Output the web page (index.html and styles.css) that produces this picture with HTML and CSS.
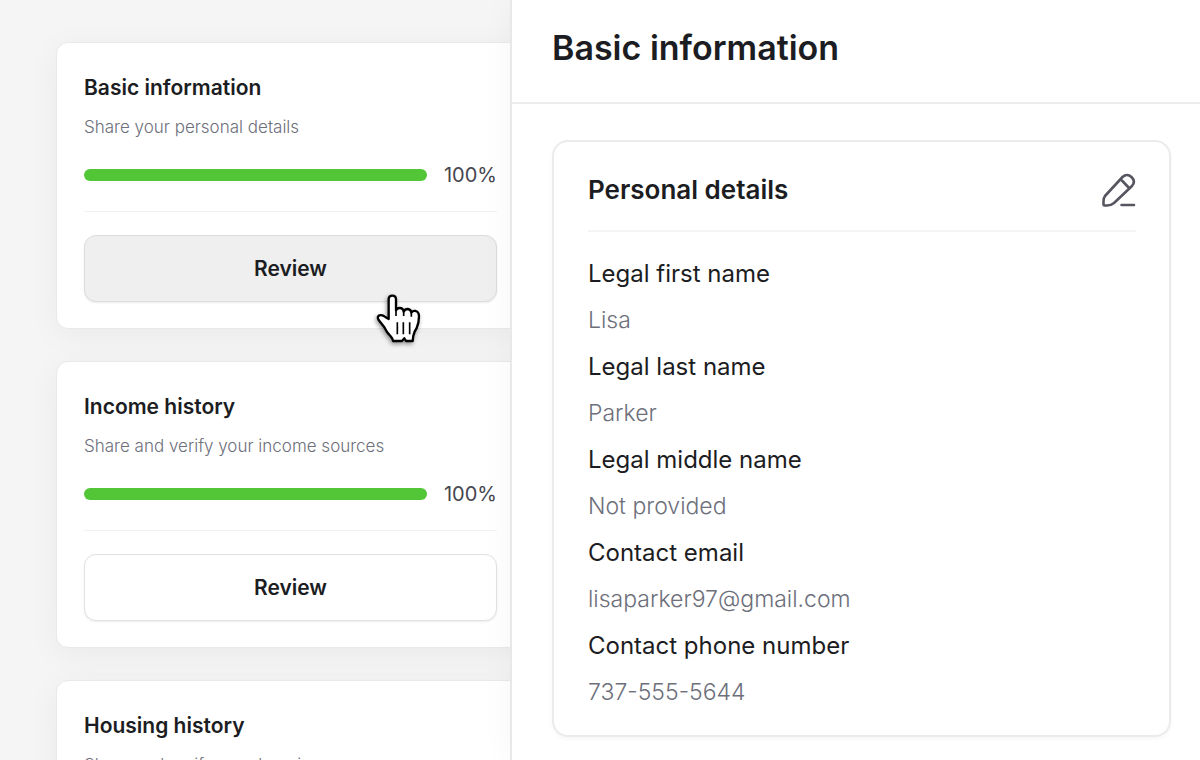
FILE: index.html
```html
<!DOCTYPE html>
<html lang="en">
<head>
    <meta charset="UTF-8">
    <meta name="viewport" content="width=device-width, initial-scale=1.0">
    <title>Basic information</title>
    <link rel="stylesheet" href="styles.css">
</head>
<body>

<div class="layout">
    <main class="sections">
        <section class="card">
            <h2>Basic information</h2>
            <p>Share your personal details</p>
            <div class="progress-row">
                <progress id="basic" max="100" value="100"></progress>
                <label for="basic">100%</label>
            </div>
            <button type="button" class="review active">Review</button>
            <svg class="pointer" viewBox="45 22 144 156" aria-hidden="true">
                <path class="hand" d="M86 100V41Q86 30 97 30Q108 30 108 41V74Q111 67 119 67Q130 67 131 78Q135 70 143 70Q153 71 154 81Q159 74 167 76Q177 79 177 92Q177 112 170 127Q162 139 160 150L158 166H138L133 158L126 166H99Q99 159 92 152Q80 141 73 125L56 103Q50 93 58 89Q67 86 76 94Z"/>
                <path class="lines" d="M108 72V91M131 76V91M154 79V93M112 110V146M130 110V146M149 110V146"/>
            </svg>
        </section>

        <section class="card">
            <h2>Income history</h2>
            <p>Share and verify your income sources</p>
            <div class="progress-row">
                <progress id="income" max="100" value="100"></progress>
                <label for="income">100%</label>
            </div>
            <button type="button" class="review">Review</button>
        </section>

        <section class="card">
            <h2>Housing history</h2>
            <p>Share and verify your housing</p>
        </section>
    </main>

    <aside class="drawer">
        <header class="drawer-header">
            <h1>Basic information</h1>
        </header>
        <section class="details">
            <div class="details-header">
                <h2>Personal details</h2>
                <button type="button" class="edit" aria-label="Edit personal details">
                    <svg viewBox="0 0 36 36" aria-hidden="true">
                        <path d="M5 24L22.500 5Q27 1 31.500 5Q36 9.500 32 14L14 31Q11 33.500 7 33.500H4.500Q3.500 33.500 3.500 32.500V29Q3.500 26 5 24ZM21 7.500L29.500 16.500M21.500 33H34"/>
                    </svg>
                </button>
            </div>
            <dl>
                <dt>Legal first name</dt>
                <dd>Lisa</dd>
                <dt>Legal last name</dt>
                <dd>Parker</dd>
                <dt>Legal middle name</dt>
                <dd>Not provided</dd>
                <dt>Contact email</dt>
                <dd>lisaparker97@gmail.com</dd>
                <dt>Contact phone number</dt>
                <dd>737-555-5644</dd>
            </dl>
        </section>
    </aside>
</div>

</body>
</html>
```
FILE: styles.css
```css
* {
    box-sizing: border-box;
}
body {
    margin: 0;
    font-family: Inter, "Noto Sans", sans-serif;
    color: #1c1d22;
    background-color: #f5f5f5;
}
h1, h2, p, dl, dd {
    margin: 0;
}
h1, h2 {
    font-weight: 600;
}
button {
    font-family: inherit;
    color: inherit;
    cursor: pointer;
}
.layout {
    display: grid;
    grid-template-columns: 17fr 23fr;
    height: 100vh;
    overflow: hidden;
}

/* section cards, running in under the drawer */
.sections {
    display: flex;
    flex-direction: column;
    gap: 32px;
    padding: 42px 0 0 56px;
    min-width: 0;
    overflow: hidden;
}
.card {
    position: relative;
    flex: none;
    margin-right: -15px;
    padding: 30px 27px 26px;
    background-color: #fff;
    border: 1px solid #e9e9e9;
    border-radius: 12px;
    box-shadow: 0 6px 32px rgba(0, 0, 0, 0.05);
}
.card h2 {
    font-size: 21px;
    line-height: 30px;
}
.card p {
    margin: 10px 0 20px;
    font-size: 17px;
    line-height: 28px;
    font-weight: 300;
    color: #6d6f7b;
}
.progress-row {
    display: flex;
    align-items: center;
    gap: 17px;
    padding-bottom: 22px;
    border-bottom: 1px solid #f2f2f2;
}
.progress-row label {
    font-size: 20px;
    line-height: 28px;
    color: #45464f;
}
progress {
    flex: 1;
    min-width: 0;
    height: 12px;
    appearance: none;
    border: none;
    border-radius: 6px;
    overflow: hidden;
    background-color: #eee;
}
progress::-webkit-progress-bar {
    background-color: #eee;
}
progress::-webkit-progress-value {
    background-color: #53c637;
}
.review {
    display: block;
    width: 100%;
    height: 67px;
    margin-top: 23px;
    font-size: 21px;
    font-weight: 600;
    background-color: #fff;
    border: 1px solid #e2e2e2;
    border-radius: 12px;
    box-shadow: 0 1px 2px rgba(0, 0, 0, 0.08);
}
.review.active {
    background-color: #efefef;
    border-color: #dcdcdc;
}
.pointer {
    position: absolute;
    left: 318px;
    top: 250px;
    width: 48px;
    height: 52px;
    filter: drop-shadow(-1px 2px 2px rgba(0, 0, 0, 0.4));
}
.hand {
    fill: #fff;
    stroke: #000;
    stroke-width: 7;
    stroke-linejoin: round;
}
.lines {
    fill: none;
    stroke: #000;
    stroke-width: 5;
}

/* drawer */
.drawer {
    position: relative;
    background-color: #fff;
    border-left: 2px solid #e8e8e8;
    box-shadow: 0 0 32px rgba(0, 0, 0, 0.04);
}
.drawer-header {
    padding: 24px 40px 30px;
    border-bottom: 2px solid #ededed;
}
.drawer-header h1 {
    font-size: 34px;
    line-height: 48px;
}
.details {
    margin: 36px 29px 24px 40px;
    padding: 28px 33px 20px 34px;
    border: 2px solid #ebebeb;
    border-radius: 16px;
    box-shadow: 0 2px 4px rgba(0, 0, 0, 0.04);
}
.details-header {
    display: flex;
    align-items: center;
    justify-content: space-between;
    padding-bottom: 20px;
    border-bottom: 2px solid #f5f5f5;
}
.details-header h2 {
    font-size: 26px;
    line-height: 40px;
}
.edit {
    padding: 0;
    border: none;
    background: none;
}
.edit svg {
    display: block;
    width: 36px;
    height: 36px;
    fill: none;
    stroke: #55565f;
    stroke-width: 2.6;
    stroke-linecap: round;
    stroke-linejoin: round;
}
dl {
    padding-top: 18px;
    font-size: 24px;
    line-height: 47px;
}
dd {
    font-size: 23px;
    line-height: 46px;
    font-weight: 300;
    color: #6d6f7b;
}
```
